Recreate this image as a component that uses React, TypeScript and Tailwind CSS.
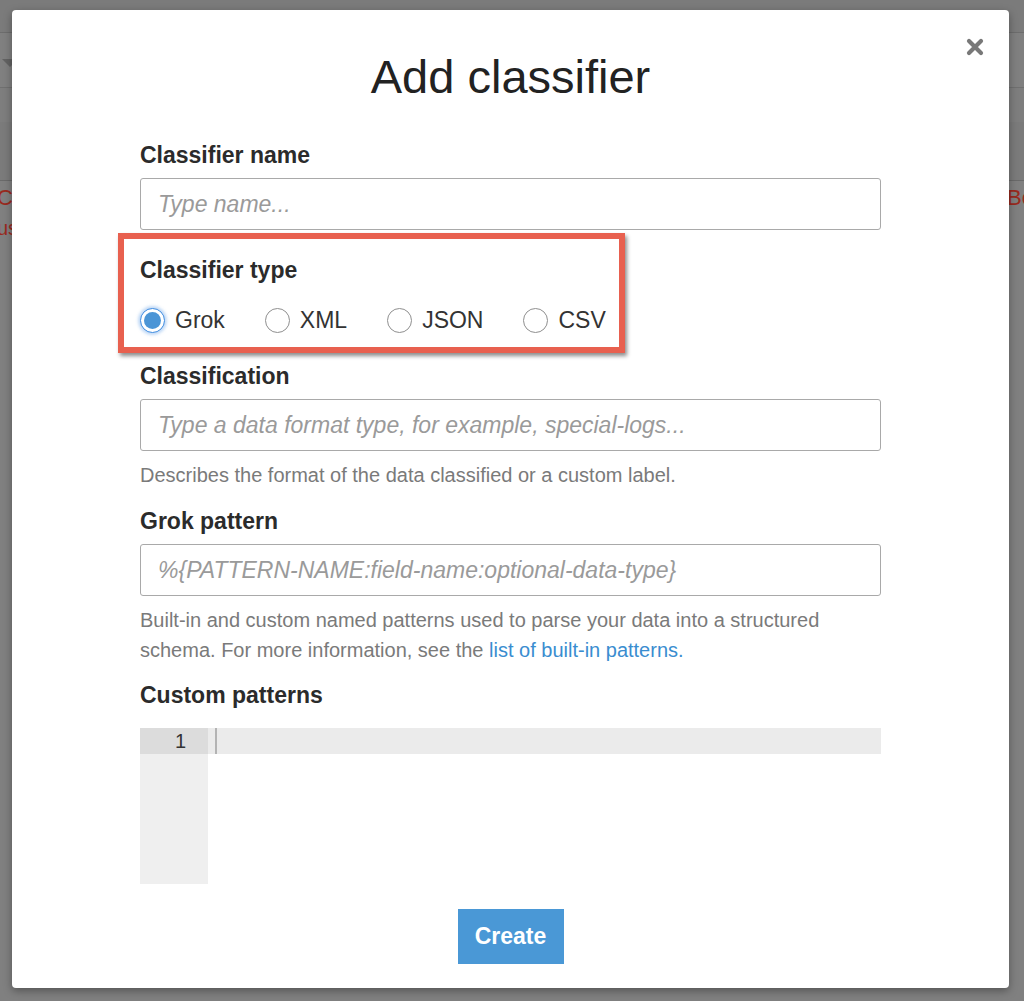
import React, { useState } from 'react';

const font = { fontFamily: '"Liberation Sans", Arial, sans-serif' };

const types = ['Grok', 'XML', 'JSON', 'CSV'];

const Radio: React.FC<{ label: string; checked: boolean; onSelect: () => void }> = ({ label, checked, onSelect }) => (
  <label className="flex items-center gap-[10px] cursor-pointer" onClick={onSelect}>
    {checked ? (
      <span className="w-[25px] h-[25px] rounded-full border border-[#3d8be0] bg-white flex items-center justify-center shadow-[0_0_3px_2px_rgba(80,150,230,0.35)]">
        <span className="w-[17px] h-[17px] rounded-full bg-[#4b95d6]"></span>
      </span>
    ) : (
      <span className="w-[25px] h-[25px] rounded-full border border-[#8f8f8f] bg-white"></span>
    )}
    <span className="text-[23px] leading-[28px] text-[#333]">{label}</span>
  </label>
);

const Field: React.FC<{ label: string; placeholder: string }> = ({ label, placeholder }) => (
  <div>
    <div className="text-[23px] leading-[28px] font-bold text-[#2b2b2b]">{label}</div>
    <input
      placeholder={placeholder}
      className="mt-[9px] w-full h-[52px] rounded-[3px] border border-[#a9a9a9] px-[17px] text-[23px] text-[#333] outline-none placeholder:italic placeholder:text-[#9a9a9a]"
      style={font}
    />
  </div>
);

const App: React.FC = () => {
  const [type, setType] = useState('Grok');

  return (
    <div className="relative w-[1024px] h-[1001px] overflow-hidden bg-[#808080]" style={font}>
      {/* Page behind the overlay */}
      <div className="h-[33px] bg-[#7b7b7b] border-b border-[#6d6d6d]"></div>
      <div className="h-[55px] flex items-center border-b border-[#707070]">
        <span className="ml-[2px] mt-[6px] w-0 h-0 border-l-[8px] border-r-[8px] border-t-[8px] border-l-transparent border-r-transparent border-t-[#636363]"></span>
      </div>
      <div className="h-[34px] bg-[#7e7e7e]"></div>
      <div className="h-[59px] bg-[#7b7b7b] border-b border-[#6a6a6a]"></div>
      <div className="flex justify-between text-[22px] leading-[30px] text-[#9a2a1e]">
        <div className="-ml-[3px] pt-[2px]">
          <div>C</div>
          <div className="text-[20px]">us</div>
        </div>
        <div className="-mr-[10px] pt-[2px]">Bo</div>
      </div>

      {/* Modal */}
      <div className="absolute left-[12px] top-[10px] w-[997px] h-[978px] bg-white rounded-[4px] shadow-[0_3px_8px_rgba(0,0,0,0.35)] px-[128px] pt-[39px]">
        <button className="absolute right-[24px] top-[27px] text-[#777]">
          <svg width="20" height="20" viewBox="0 0 20 20">
            <path d="M4 4 L16 16 M16 4 L4 16" stroke="#787878" strokeWidth="4.2" strokeLinecap="round" />
          </svg>
        </button>

        <h1 className="text-center text-[47px] leading-[56px] text-[#222]">Add classifier</h1>

        <div className="mt-[36px]">
          <Field label="Classifier name" placeholder="Type name..." />
        </div>

        <div className="relative mt-[26px]">
          <div className="absolute -left-[22px] -top-[23px] w-[507px] h-[120px] border-[6px] border-[#e8604f] shadow-[2px_3px_4px_rgba(0,0,0,0.45)] pointer-events-none"></div>
          <div className="text-[23px] leading-[28px] font-bold text-[#2b2b2b]">Classifier type</div>
          <div className="mt-[22px] flex items-center gap-[40px]">
            {types.map(t => (
              <Radio key={t} label={t} checked={type === t} onSelect={() => setType(t)} />
            ))}
          </div>
        </div>

        <div className="mt-[28px]">
          <Field label="Classification" placeholder="Type a data format type, for example, special-logs..." />
          <p className="mt-[9px] text-[20px] leading-[30px] text-[#7a7a7a]">
            Describes the format of the data classified or a custom label.
          </p>
        </div>

        <div className="mt-[17px]">
          <Field label="Grok pattern" placeholder="%{PATTERN-NAME:field-name:optional-data-type}" />
          <p className="mt-[9px] text-[20px] leading-[30px] text-[#7a7a7a]">
            Built-in and custom named patterns used to parse your data into a structured schema. For more information, see the{' '}
            <a className="text-[#3a8dd0]">list of built-in patterns.</a>
          </p>
        </div>

        <div className="mt-[16px]">
          <div className="text-[23px] leading-[28px] font-bold text-[#2b2b2b]">Custom patterns</div>
          <div className="mt-[19px] flex h-[156px]">
            <div className="w-[68px] bg-[#efefef]">
              <div className="h-[26px] bg-[#dcdcdc] text-right pr-[22px] text-[20px] leading-[26px] text-[#333]">1</div>
            </div>
            <div className="flex-1">
              <div className="h-[26px] bg-[#ebebeb] flex">
                <span className="ml-[7px] w-[2px] h-[26px] bg-[#b3b3b3]"></span>
              </div>
            </div>
          </div>
        </div>

        <div className="mt-[25px] flex justify-center">
          <button className="w-[106px] h-[55px] bg-[#4a98d6] text-white font-bold text-[23px]" style={font}>
            Create
          </button>
        </div>
      </div>
    </div>
  );
};

export default App;
